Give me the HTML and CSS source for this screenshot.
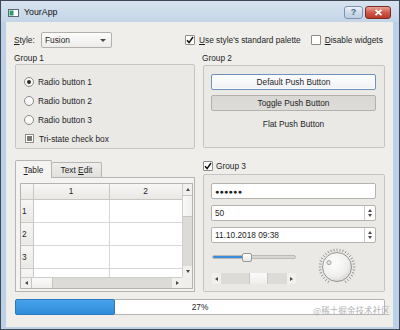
FILE: index.html
```html
<!DOCTYPE html>
<html>
<head>
	<meta charset="utf-8">
	<title>YourApp</title>
	<link rel="stylesheet" href="styles.css">
</head>
<body>
<div class="window">
	<div class="titlebar">
		<svg class="appicon" width="11" height="8" viewBox="0 0 11 8"><rect x="0.5" y="0.5" width="10" height="7" fill="#fff" stroke="#5d6875"/><rect x="1.5" y="1.5" width="4" height="5" fill="#2c9a6c"/></svg>
		<span class="title">YourApp</span>
		<div class="capbtns">
			<span class="capbtn help">?</span>
			<span class="capbtn close"><svg width="9" height="7" viewBox="0 0 9 7"><path d="M1.5 0.8 L7.5 6.2 M7.5 0.8 L1.5 6.2" stroke="#fff" stroke-width="1.8"/></svg></span>
		</div>
	</div>

	<div class="client">
		<div class="toprow">
			<span class="stylelbl"><u>S</u>tyle:</span>
			<div class="combo"><span>Fusion</span><span class="darrow"></span></div>
			<div class="check first">
				<span class="box"><svg width="8" height="8" viewBox="0 0 8 8"><path d="M1 4.2 L3.1 6.6 L7 1" stroke="#111" stroke-width="1.5" fill="none"/></svg></span>
				<span><u>U</u>se style's standard palette</span>
			</div>
			<div class="check second">
				<span class="box"></span>
				<span><u>D</u>isable widgets</span>
			</div>
		</div>

		<div class="grid">
			<div class="group">
				<div class="gtitle">Group 1</div>
				<div class="gframe g1">
					<div class="opt"><span class="radio on"></span>Radio button 1</div>
					<div class="opt"><span class="radio"></span>Radio button 2</div>
					<div class="opt"><span class="radio"></span>Radio button 3</div>
					<div class="opt"><span class="tri"></span>Tri-state check box</div>
				</div>
			</div>

			<div class="group">
				<div class="gtitle">Group 2</div>
				<div class="gframe g2">
					<div class="btn default">Default Push Button</div>
					<div class="btn toggled">Toggle Push Button</div>
					<div class="btn flat">Flat Push Button</div>
				</div>
			</div>

			<div class="tabs">
				<div class="tabbar">
					<span class="tab active"><span><u>T</u>able</span></span>
					<span class="tab"><span>Text <u>E</u>dit</span></span>
				</div>
				<div class="pane">
					<div class="tableview">
						<div class="viewport">
							<table>
								<colgroup><col class="c0"><col class="c1"><col class="c2"></colgroup>
								<tr class="head"><th></th><th>1</th><th>2</th></tr>
								<tr><th class="rh">1</th><td></td><td></td></tr>
								<tr><th class="rh">2</th><td></td><td></td></tr>
								<tr><th class="rh">3</th><td></td><td></td></tr>
								<tr><th class="rh">4</th><td></td><td></td></tr>
							</table>
						</div>
						<div class="vscroll">
							<span class="sbtn"><i class="a-up"></i></span>
							<span class="vhandle"></span>
							<span class="trough"></span>
							<span class="sbtn"><i class="a-down"></i></span>
						</div>
						<div class="hscroll">
							<span class="sbtn"><i class="a-left"></i></span>
							<span class="hhandle"></span>
							<span class="trough"></span>
							<span class="sbtn"><i class="a-right"></i></span>
						</div>
						<div class="corner"></div>
					</div>
				</div>
			</div>

			<div class="group">
				<div class="gtitle g3title">
					<span class="box"><svg width="8" height="8" viewBox="0 0 8 8"><path d="M1 4.2 L3.1 6.6 L7 1" stroke="#111" stroke-width="1.5" fill="none"/></svg></span>
					<span>Group 3</span>
				</div>
				<div class="gframe g3">
					<div class="edit pass">&#9679;&#9679;&#9679;&#9679;&#9679;&#9679;</div>
					<div class="edit spin"><span>50</span><span class="spinbtns"><i class="a-up"></i><i class="a-down"></i></span></div>
					<div class="edit spin"><span>11.10.2018 09:38</span><span class="spinbtns"><i class="a-up"></i><i class="a-down"></i></span></div>
					<div class="lower">
						<div class="sliders">
							<div class="slider">
								<div class="groove"><div class="fill"></div></div>
								<div class="handle"></div>
							</div>
							<div class="hscroll small">
								<span class="sbtn"><i class="a-left"></i></span>
								<span class="trough t1"></span>
								<span class="hhandle h2"></span>
								<span class="trough"></span>
								<span class="sbtn"><i class="a-right"></i></span>
							</div>
						</div>
						<svg class="dial" width="38" height="38" viewBox="0 0 38 38">
							<defs>
								<line id="tick" x1="19" y1="0.6" x2="19" y2="3.2" stroke="#7c7c7c" stroke-width="0.7"/>
								<radialGradient id="knob" cx="0.4" cy="0.35" r="0.7">
									<stop offset="0" stop-color="#ffffff"/>
									<stop offset="0.7" stop-color="#eeeeec"/>
									<stop offset="1" stop-color="#d4d3d0"/>
								</radialGradient>
							</defs>
							<use href="#tick" transform="rotate(-150 19 19)"/>
							<use href="#tick" transform="rotate(-140 19 19)"/>
							<use href="#tick" transform="rotate(-130 19 19)"/>
							<use href="#tick" transform="rotate(-120 19 19)"/>
							<use href="#tick" transform="rotate(-110 19 19)"/>
							<use href="#tick" transform="rotate(-100 19 19)"/>
							<use href="#tick" transform="rotate(-90 19 19)"/>
							<use href="#tick" transform="rotate(-80 19 19)"/>
							<use href="#tick" transform="rotate(-70 19 19)"/>
							<use href="#tick" transform="rotate(-60 19 19)"/>
							<use href="#tick" transform="rotate(-50 19 19)"/>
							<use href="#tick" transform="rotate(-40 19 19)"/>
							<use href="#tick" transform="rotate(-30 19 19)"/>
							<use href="#tick" transform="rotate(-20 19 19)"/>
							<use href="#tick" transform="rotate(-10 19 19)"/>
							<use href="#tick"/>
							<use href="#tick" transform="rotate(10 19 19)"/>
							<use href="#tick" transform="rotate(20 19 19)"/>
							<use href="#tick" transform="rotate(30 19 19)"/>
							<use href="#tick" transform="rotate(40 19 19)"/>
							<use href="#tick" transform="rotate(50 19 19)"/>
							<use href="#tick" transform="rotate(60 19 19)"/>
							<use href="#tick" transform="rotate(70 19 19)"/>
							<use href="#tick" transform="rotate(80 19 19)"/>
							<use href="#tick" transform="rotate(90 19 19)"/>
							<use href="#tick" transform="rotate(100 19 19)"/>
							<use href="#tick" transform="rotate(110 19 19)"/>
							<use href="#tick" transform="rotate(120 19 19)"/>
							<use href="#tick" transform="rotate(130 19 19)"/>
							<use href="#tick" transform="rotate(140 19 19)"/>
							<use href="#tick" transform="rotate(150 19 19)"/>
							<circle cx="19" cy="19" r="14.5" fill="url(#knob)" stroke="#8c8b88" stroke-width="0.9"/>
							<circle cx="11" cy="14.6" r="2.1" fill="#e2e1de" stroke="#8c8b88" stroke-width="0.7"/>
						</svg>
					</div>
				</div>
			</div>
		</div>

		<div class="progress">
			<div class="chunk"></div>
			<span class="ptext">27%</span>
		</div>
	</div>

	<div class="watermark">@稀土掘金技术社区</div>
</div>
</body>
</html>
```

FILE: styles.css
```css
*
{
	box-sizing: border-box;
}
body
{
	margin: 0;
	font-family: "Liberation Sans", Arial, sans-serif;
	font-size: 8.3px;
	color: #1e1e1e;
}
u
{
	text-decoration-thickness: 1px;
	text-underline-offset: 1px;
}

/* window frame */
.window
{
	position: relative;
	width: 400px;
	height: 330px;
	border: 1px solid #3e4955;
	background: #bcd1e8;
	padding: 0 6px 2px 5px;
	display: flex;
	flex-direction: column;
}
.titlebar
{
	height: 21px;
	margin: 0 -6px 0 -5px;
	padding: 0 8px 0 6px;
	display: flex;
	align-items: center;
	background: linear-gradient(#d7e3ef, #c4d5e8);
}
.appicon
{
	margin-left: 1px;
	margin-top: 2px;
}
.title
{
	margin-left: 5px;
	margin-top: 1px;
	font-size: 8.8px;
	color: #111;
}
.capbtns
{
	margin-left: auto;
	display: flex;
	margin-top: 1px;
}
.capbtn
{
	height: 13px;
	border-radius: 3px;
	display: flex;
	align-items: center;
	justify-content: center;
}
.help
{
	width: 19px;
	border: 1px solid #8095ad;
	background: linear-gradient(#eef3f9, #cddbea 50%, #bccfe4);
	color: #4a6585;
	font-weight: bold;
	font-size: 9px;
}
.close
{
	width: 26px;
	margin-left: 2px;
	border: 1px solid #7b2c22;
	background: linear-gradient(#e9a397, #d05a49 50%, #bb3a29);
}

/* client area */
.client
{
	flex: 1;
	background: #efeeeb;
	padding: 10px 8px 0 9px;
	display: flex;
	flex-direction: column;
}
.toprow
{
	height: 16px;
	margin-bottom: 5px;
	display: flex;
	align-items: center;
}
.stylelbl
{
	width: 27px;
	margin-left: -1px;
}
.combo
{
	width: 71px;
	height: 16px;
	border: 1px solid #b2b0ac;
	border-radius: 2px;
	background: linear-gradient(#fcfcfb, #edecea);
	padding: 0 5px 0 3px;
	display: flex;
	align-items: center;
	justify-content: space-between;
}
.darrow
{
	border-left: 3px solid transparent;
	border-right: 3px solid transparent;
	border-top: 3px solid #4a4a4a;
}
.check
{
	display: flex;
	align-items: center;
	gap: 4px;
}
.check.first
{
	margin-left: 73px;
}
.check.second
{
	margin-left: 10px;
}
.box
{
	width: 10px;
	height: 10px;
	border: 1px solid #8d8b87;
	border-radius: 1px;
	background: #fff;
	display: flex;
	align-items: center;
	justify-content: center;
}

/* groups */
.grid
{
	display: grid;
	grid-template-columns: 180px 182px;
	grid-template-rows: 95px 139px;
	column-gap: 8px;
	row-gap: 5px;
}
.group
{
	display: flex;
	flex-direction: column;
}
.gtitle
{
	height: 12px;
	line-height: 11px;
	margin-left: -1px;
}
.gframe
{
	flex: 1;
	border: 1px solid #c7c5c1;
	border-radius: 2px;
	background: rgba(0, 0, 0, 0.018);
}
.g1
{
	padding: 7px 0 0 8px;
}
.opt
{
	height: 19px;
	display: flex;
	align-items: center;
	gap: 4px;
}
.radio
{
	width: 10px;
	height: 10px;
	border: 1px solid #8d8b87;
	border-radius: 50%;
	background: linear-gradient(#fff, #f3f3f2);
	display: flex;
	align-items: center;
	justify-content: center;
}
.radio.on::after
{
	content: "";
	width: 4px;
	height: 4px;
	border-radius: 50%;
	background: #2b2b2b;
}
.tri
{
	width: 9px;
	height: 9px;
	margin: 0 1px 0 1px;
	border: 1px solid #8d8b87;
	background: #fff;
	display: flex;
	align-items: center;
	justify-content: center;
}
.tri::after
{
	content: "";
	width: 5px;
	height: 5px;
	background: #7a7977;
}

.g2
{
	padding: 8px 8px 0 7px;
	display: flex;
	flex-direction: column;
	gap: 5px;
}
.btn
{
	height: 16px;
	border-radius: 2px;
	display: flex;
	align-items: center;
	justify-content: center;
}
.btn.default
{
	border: 1px solid #6f93bb;
	background: linear-gradient(#ffffff, #eef1f4);
	box-shadow: inset 0 0 0 1px #f8fbff;
}
.btn.toggled
{
	border: 1px solid #b3b1ad;
	background: linear-gradient(#d9d8d5, #dedcd9);
}

/* tabs and table */
.tabs
{
	margin-top: 7px;
	display: flex;
	flex-direction: column;
}
.tabbar
{
	height: 17px;
	display: flex;
	align-items: flex-end;
}
.tab
{
	width: 50px;
	height: 15px;
	border: 1px solid #b7b5b1;
	border-bottom: none;
	border-left: none;
	border-radius: 2px 2px 0 0;
	background: linear-gradient(#efeeec, #e1e0dd);
	display: flex;
	align-items: center;
	justify-content: center;
}
.tab.active
{
	width: 37px;
	height: 18px;
	margin-bottom: -1px;
	border-left: 1px solid #b7b5b1;
	background: #f4f3f1;
	position: relative;
	z-index: 1;
}
.pane
{
	flex: 1;
	border: 1px solid #b7b5b1;
	background: #f4f3f1;
	padding: 5px 2px 2px 4px;
}
.tableview
{
	width: 173px;
	height: 106px;
	border: 1px solid #b5b3af;
	background: #fff;
	display: grid;
	grid-template-columns: 1fr 10px;
	grid-template-rows: 1fr 11px;
}
.viewport
{
	overflow: hidden;
}
table
{
	border-collapse: collapse;
	table-layout: fixed;
	width: 161px;
}
col.c0
{
	width: 12px;
}
col.c1
{
	width: 76px;
}
col.c2
{
	width: 73px;
}
th
{
	font-weight: normal;
	background: linear-gradient(#f7f6f4, #e9e8e5);
	border-right: 1px solid #c9c7c3;
	border-bottom: 1px solid #c9c7c3;
	padding: 0;
}
tr.head th
{
	height: 15px;
}
th.rh
{
	text-align: left;
	padding-left: 1px;
}
td
{
	height: 23px;
	border: 1px solid #d7d7d7;
	border-top: none;
}

.vscroll, .hscroll
{
	display: flex;
	background: #dddbd8;
}
.vscroll
{
	flex-direction: column;
	border-left: 1px solid #cfcdca;
}
.hscroll
{
	border-top: 1px solid #cfcdca;
}
.sbtn
{
	flex: none;
	width: 10px;
	height: 10px;
	background: #f1f0ee;
	display: flex;
	align-items: center;
	justify-content: center;
}
.vscroll .sbtn
{
	width: 9px;
	height: 11px;
}
.trough
{
	flex: 1;
}
.vhandle
{
	height: 22px;
	background: linear-gradient(90deg, #fafafa, #f0efed);
	border-top: 1px solid #c8c6c2;
	border-bottom: 1px solid #c8c6c2;
}
.hhandle
{
	width: 22px;
	background: linear-gradient(#fafafa, #efeeec);
	border-left: 1px solid #c8c6c2;
	border-right: 1px solid #c8c6c2;
}
.corner
{
	background: #efeeeb;
}
.a-up, .a-down, .a-left, .a-right
{
	width: 0;
	height: 0;
}
.a-up
{
	border-left: 2.5px solid transparent;
	border-right: 2.5px solid transparent;
	border-bottom: 3px solid #4a4a4a;
}
.a-down
{
	border-left: 2.5px solid transparent;
	border-right: 2.5px solid transparent;
	border-top: 3px solid #4a4a4a;
}
.a-left
{
	border-top: 2.5px solid transparent;
	border-bottom: 2.5px solid transparent;
	border-right: 3px solid #4a4a4a;
}
.a-right
{
	border-top: 2.5px solid transparent;
	border-bottom: 2.5px solid transparent;
	border-left: 3px solid #4a4a4a;
}

/* group 3 */
.g3title
{
	height: 21px;
	margin-left: 0;
	padding-top: 5px;
	display: flex;
	align-items: center;
	gap: 3px;
}
.g3
{
	padding: 8px 8px 0 7px;
}
.edit
{
	height: 16px;
	margin-bottom: 6px;
	border: 1px solid #b5b3af;
	border-radius: 2px;
	background: #fff;
	padding-left: 3px;
	display: flex;
	align-items: center;
}
.edit.pass
{
	font-size: 7px;
	letter-spacing: 0.3px;
}
.spin
{
	justify-content: space-between;
}
.spinbtns
{
	width: 11px;
	height: 100%;
	border-left: 1px solid #cdcbc7;
	display: flex;
	flex-direction: column;
	align-items: center;
	justify-content: space-evenly;
}
.lower
{
	margin-top: -1px;
	display: flex;
}
.sliders
{
	width: 84px;
	margin-left: 1px;
	padding-top: 1px;
}
.slider
{
	position: relative;
	height: 16px;
	display: flex;
	align-items: center;
}
.groove
{
	width: 100%;
	height: 4px;
	border-radius: 2px;
	border: 1px solid #bcbab6;
	background: #d9d7d4;
	overflow: hidden;
}
.fill
{
	width: 33px;
	height: 100%;
	background: #3a8cdb;
}
.handle
{
	position: absolute;
	left: 30px;
	top: 4px;
	width: 10px;
	height: 9px;
	border: 1px solid #9a9894;
	border-radius: 2px;
	background: linear-gradient(#ffffff, #e9e8e6);
}
.hscroll.small
{
	height: 11px;
	margin-top: 8px;
	border-top: none;
}
.hscroll.small .sbtn
{
	width: 9px;
	height: 11px;
}
.hscroll.small .t1
{
	flex: none;
	width: 28px;
}
.hscroll.small .h2
{
	width: 19px;
}
.dial
{
	margin-left: 22px;
}

/* progress */
.progress
{
	height: 16px;
	margin-top: 7px;
	border: 1px solid #b5b3af;
	border-radius: 2px;
	background: #fff;
	display: grid;
}
.chunk, .ptext
{
	grid-area: 1 / 1;
}
.chunk
{
	width: 100px;
	margin: -1px 0 -1px -1px;
	border: 1px solid #2b79bf;
	border-radius: 2px;
	background: linear-gradient(#47a3ea, #2f8cd8);
}
.ptext
{
	align-self: center;
	justify-self: center;
}

.watermark
{
	position: absolute;
	left: 312px;
	top: 303px;
	font-family: "Noto Sans CJK SC", sans-serif;
	font-size: 8.6px;
	color: #b2b2b2;
}
```
